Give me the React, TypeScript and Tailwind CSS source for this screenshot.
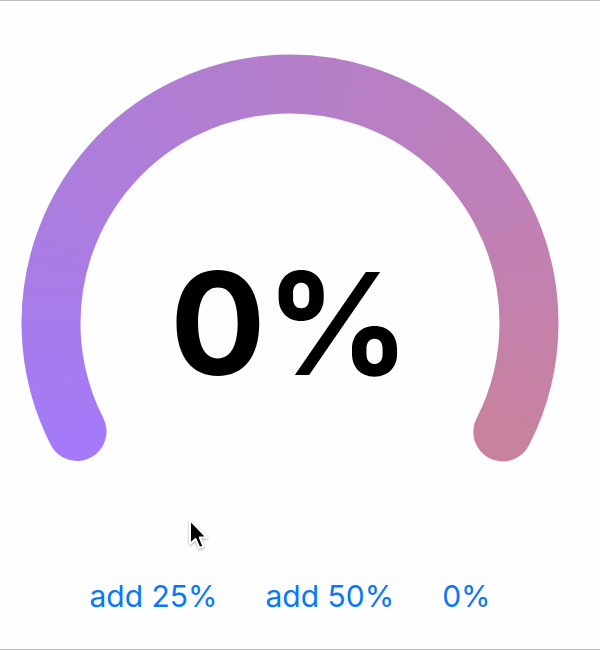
import { useState } from "react";

const RADIUS = 239;
const SWEEP = 0.65;
const CIRCUMFERENCE = 2 * Math.PI * RADIUS;

function Ring({ progress }: { progress: number }) {
  const arc = {
    cx: 269,
    cy: 269,
    r: RADIUS,
    fill: "none",
    strokeWidth: 59,
    strokeLinecap: "round" as const,
    transform: "rotate(153 269 269)",
  };
  return (
    <svg viewBox="0 0 538 538" className="col-start-1 row-start-1 w-full" aria-hidden="true">
      <mask id="track" maskUnits="userSpaceOnUse" x="0" y="0" width="538" height="538">
        <circle {...arc} stroke="white" strokeDasharray={`${CIRCUMFERENCE * SWEEP} ${CIRCUMFERENCE}`} />
      </mask>
      <g mask="url(#track)">
        <foreignObject width="538" height="538">
          <div className="h-[538px] w-[538px] bg-[conic-gradient(from_235deg,#a47af8_0deg,#a47af8_8deg,#ab7ddf_62deg,#b47eca_125deg,#bf80b7_187deg,#c8819e_242deg,#c8819e_300deg,#a47af8_300deg)]" />
        </foreignObject>
      </g>
      {progress > 0 && (
        <circle
          {...arc}
          stroke="#7c3aed"
          strokeDasharray={`${CIRCUMFERENCE * SWEEP * (progress / 100)} ${CIRCUMFERENCE}`}
        />
      )}
    </svg>
  );
}

function Cursor() {
  return (
    <svg
      viewBox="0 0 20 32"
      className="pointer-events-none absolute top-[517px] left-[188px] w-5 drop-shadow-[0_1px_1px_rgba(0,0,0,0.35)]"
      aria-hidden="true"
    >
      <path
        d="M2 2V26L7.5 21L11.5 30L15.5 28.3L11.8 19.5H18.8Z"
        fill="black"
        stroke="white"
        strokeWidth="2"
        strokeLinejoin="round"
      />
    </svg>
  );
}

export default function App() {
  const [progress, setProgress] = useState(0);
  const add = (amount: number) => setProgress((value) => Math.min(100, value + amount));
  const button = "cursor-pointer text-3xl leading-10 text-[#0a78f5]";

  return (
    <main className="relative min-h-screen border-y border-[#bdbcbf] bg-[#fefdff] pr-5 font-['Inter','Liberation_Sans',sans-serif]">
      <div className="mx-auto flex max-w-[538px] flex-col items-center pt-[53px]">
        <div className="grid w-full place-items-center">
          <Ring progress={progress} />
          <output className="col-start-1 row-start-1 text-[142px] leading-none font-bold text-black">
            {progress}%
          </output>
        </div>
        <div className="-mt-4 flex justify-center gap-12">
          <button type="button" className={button} onClick={() => add(25)}>
            add 25%
          </button>
          <button type="button" className={button} onClick={() => add(50)}>
            add 50%
          </button>
          <button type="button" className={button} onClick={() => setProgress(0)}>
            0%
          </button>
        </div>
      </div>
      <Cursor />
    </main>
  );
}
